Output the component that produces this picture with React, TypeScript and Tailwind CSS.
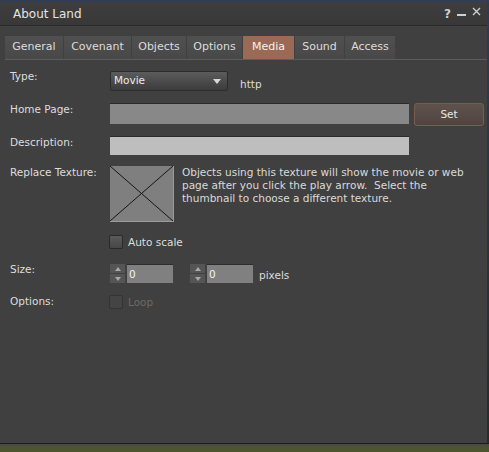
import React from "react";

const font = { fontFamily: '"DejaVu Sans", "Liberation Sans", sans-serif' };

function Tab({ label, w, active }: { label: string; w: string; active?: boolean }) {
  return (
    <div
      className={
        "h-[23px] flex items-center justify-center text-[11px] " +
        w +
        " " +
        (active
          ? "bg-[#9a6a54] text-[#f2f2f2]"
          : "bg-gradient-to-b from-[#505050] to-[#484848] text-[#dcdcdc]")
      }
    >
      {label}
    </div>
  );
}

function Checkbox({ disabled }: { disabled?: boolean }) {
  return (
    <div
      className={
        "w-[14px] h-[14px] rounded-[2px] border " +
        (disabled
          ? "border-[#333333] bg-[#444444]"
          : "border-[#2a2a2a] bg-gradient-to-b from-[#5a5a5a] to-[#474747]")
      }
    />
  );
}

function Spinner() {
  return (
    <div className="flex h-[19px]">
      <div className="w-[15px] h-[19px] flex flex-col gap-[1px]">
        <div className="flex-1 bg-[#555555] flex items-center justify-center">
          <svg width="6" height="4" viewBox="0 0 6 4">
            <path d="M0 4 L3 0 L6 4 Z" fill="#a8a8a8" />
          </svg>
        </div>
        <div className="flex-1 bg-[#555555] flex items-center justify-center">
          <svg width="6" height="4" viewBox="0 0 6 4">
            <path d="M0 0 L3 4 L6 0 Z" fill="#a8a8a8" />
          </svg>
        </div>
      </div>
      <div className="ml-[2px] w-[46px] h-[19px] bg-[#808080] border-t border-[#2c2c2c] text-[#f4f4f4] text-[10.5px] pl-[2px] leading-[18px]">
        0
      </div>
    </div>
  );
}

export default function App() {
  return (
    <div className="w-[489px] h-[452px] flex flex-col bg-[#4b5330] overflow-hidden" style={font}>
      <div className="h-[2px] bg-[#333d57]" />
      <div className="flex h-[441px]">
        <div className="w-[487px] h-full bg-[#404040] flex flex-col">
          {/* title bar */}
          <div className="h-[23px] flex items-center bg-gradient-to-b from-[#3e3e3e] to-[#383838]">
            <span className="ml-[13px] mt-[1px] text-[12px] text-[#e4e4e4]">About Land</span>
            <div className="ml-auto flex items-center gap-[6px] mr-[6px] text-[#d0d0d0]">
              <span className="text-[12px] font-bold">?</span>
              <span className="w-[9px] h-[2px] bg-[#d0d0d0] mt-[3px]" />
              <svg width="9" height="9" viewBox="0 0 9 9" className="mb-[4px]">
                <path d="M1 1 L8 8 M8 1 L1 8" stroke="#d0d0d0" strokeWidth="1.3" />
              </svg>
            </div>
          </div>
          <div className="h-[1px] bg-[#2a2a2a]" />
          <div className="flex-1 flex flex-col text-[10.5px] text-[#dddddd]">
            {/* tabs */}
            <div className="mt-[10px] ml-[5px] flex gap-[1px]">
              <Tab label="General" w="w-[58px]" />
              <Tab label="Covenant" w="w-[67px]" />
              <Tab label="Objects" w="w-[54px]" />
              <Tab label="Options" w="w-[55px]" />
              <Tab label="Media" w="w-[51px]" active />
              <Tab label="Sound" w="w-[49px]" />
              <Tab label="Access" w="w-[50px]" />
            </div>
            <div className="ml-[5px] h-[1px] bg-[#5c5c5c]" />

            {/* Type */}
            <div className="mt-[11px] flex items-start">
              <div className="w-[110px] pl-[10px] leading-[13px] -mt-[1px]">Type:</div>
              <div className="w-[118px] h-[20px] rounded-[2px] border border-[#2c2c2c] bg-gradient-to-b from-[#5c5c5c] to-[#3c3c3c] flex items-center pl-[3px] pr-[6px]">
                <span className="text-[#ececec]">Movie</span>
                <svg width="8" height="5" viewBox="0 0 8 5" className="ml-auto">
                  <path d="M0 0 L8 0 L4 5 Z" fill="#d8d8d8" />
                </svg>
              </div>
              <div className="ml-[12px] mt-[7px] leading-[13px]">http</div>
            </div>

            {/* Home Page */}
            <div className="mt-[12px] flex items-start">
              <div className="w-[110px] pl-[10px] leading-[13px]">Home Page:</div>
              <div className="w-[299px] h-[21px] bg-[#888888] border-t border-[#2a2a2a]" />
              <div className="ml-[5px] w-[70px] h-[23px] rounded-[3px] border border-[#7a5c4e] bg-gradient-to-b from-[#5e524c] to-[#4f4540] flex items-center justify-center text-[#e8e8e8]">
                Set
              </div>
            </div>

            {/* Description */}
            <div className="mt-[10px] flex items-start">
              <div className="w-[110px] pl-[10px] leading-[13px]">Description:</div>
              <div className="w-[299px] h-[19px] bg-[#bebebe] border-t border-[#2a2a2a]" />
            </div>

            {/* Replace texture */}
            <div className="mt-[11px] flex items-start">
              <div className="w-[110px] pl-[10px] leading-[13px]">Replace Texture:</div>
              <div className="w-[64px] h-[56px] bg-[#7f7f7f] border-r border-b border-[#9a9a9a]">
                <svg width="63" height="55" viewBox="0 0 63 55" className="block">
                  <path d="M0 0 L63 55 M63 0 L0 55" stroke="#151515" strokeWidth="1" />
                </svg>
              </div>
              <div className="ml-[8px] w-[300px] leading-[13px] text-[#dadada]">
                Objects using this texture will show the movie or web page after you click the play arrow.&nbsp; Select the thumbnail to choose a different texture.
              </div>
            </div>

            {/* Auto scale */}
            <div className="mt-[13px] ml-[109px] flex items-center gap-[5px]">
              <Checkbox />
              <span className="leading-[13px]">Auto scale</span>
            </div>

            {/* Size */}
            <div className="mt-[15px] flex items-start">
              <div className="w-[110px] pl-[10px] leading-[13px] -mt-[1px]">Size:</div>
              <Spinner />
              <div className="ml-[17px]">
                <Spinner />
              </div>
              <div className="ml-[6px] mt-[5px] leading-[13px]">pixels</div>
            </div>

            {/* Options */}
            <div className="mt-[12px] flex items-start">
              <div className="w-[109px] pl-[10px] leading-[13px]">Options:</div>
              <div className="flex items-center gap-[5px]">
                <Checkbox disabled />
                <span className="leading-[13px] text-[#6a6a6a]">Loop</span>
              </div>
            </div>
          </div>
        </div>
        <div className="w-[2px] h-full bg-gradient-to-b from-[#2f3a55] to-[#2a2a2a]" />
      </div>
      <div className="h-[1px] bg-[#1c1c1c]" />
      <div className="h-[2px] bg-[#4a4a4a]" />
      <div className="flex-1 bg-[#4c5430]" />
    </div>
  );
}
